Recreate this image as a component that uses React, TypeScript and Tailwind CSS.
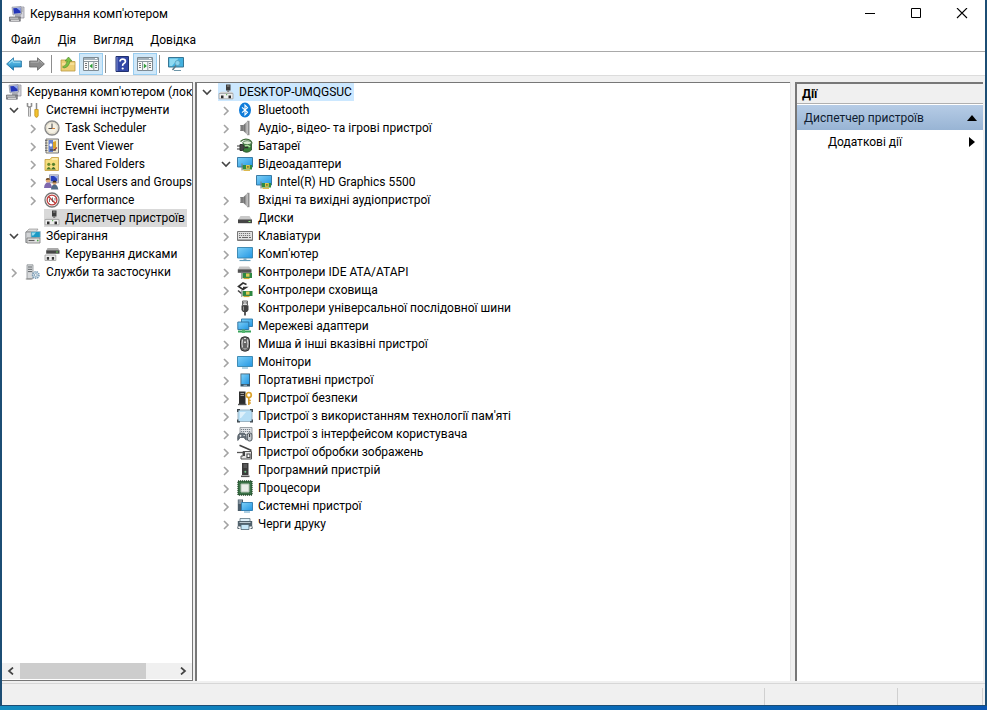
import type { ReactNode } from "react";

/* ---------- icons, all on a 16 x 16 grid ---------- */

function Svg({ children }: { children: ReactNode }) {
  return (
    <svg viewBox="0 0 16 16" className="h-4 w-4 shrink-0" aria-hidden="true">
      {children}
    </svg>
  );
}

function Gradients() {
  return (
    <svg className="absolute h-0 w-0" aria-hidden="true">
      <defs>
        <linearGradient id="screen" x1="0" y1="0" x2="1" y2="1">
          <stop offset="0" stopColor="#7fd0f7" />
          <stop offset="1" stopColor="#2196e3" />
        </linearGradient>
        <linearGradient id="cone" x1="0" y1="0" x2="1" y2="0">
          <stop offset="0" stopColor="#555" />
          <stop offset="1" stopColor="#c2c2c2" />
        </linearGradient>
        <linearGradient id="blueArrow" x1="0" y1="0" x2="0" y2="1">
          <stop offset="0" stopColor="#7bd3f2" />
          <stop offset="1" stopColor="#1583c0" />
        </linearGradient>
      </defs>
    </svg>
  );
}

const ComputerManagement = () => (
  <Svg>
    <path d="M11 1h4v11h-4z" fill="#d8d8de" stroke="#8a8a96" strokeWidth=".7" />
    <path d="M3 1.2l9-.7.6 7.5-8.6 1z" fill="#c7cad6" stroke="#888d9c" strokeWidth=".7" />
    <path d="M4.2 2.2l7-.5.5 5.4-6.8.7z" fill="#2436b8" />
    <path d="M7.5 2l3.7-.3.4 3.5z" fill="#8fa6f0" />
    <path d="M6 9h5l1 2H6z" fill="#a9abb5" />
    <path d="M.5 11h10.8v4.2H.5z" fill="#8b8c90" stroke="#57585c" strokeWidth=".6" />
    <path d="M2 11.5v1.6m2-1.6v1.6m2-1.6v1.6m2-1.6v1.6M2 14.3h8" stroke="#e6e6e6" />
    <path d="M12.5 3h1.6m-1.6 2h1.6" stroke="#888" strokeWidth=".7" />
  </Svg>
);

const Tools = () => (
  <Svg>
    <path d="M2.5 1v3l2 1.3L6.5 4V1" fill="none" stroke="#8f8f8f" strokeWidth="1.6" />
    <path d="M4.5 5v9.5" stroke="#9c9c9c" strokeWidth="3" />
    <path d="M4.5 6v8" stroke="#dedede" />
    <path d="M11.5 1v6.5" stroke="#8a8a8a" strokeWidth="1.5" />
    <path d="M9.8 7.5h3.4v6.3l-1 1.4h-1.4l-1-1.4z" fill="#f2c230" stroke="#b98a10" strokeWidth=".7" />
  </Svg>
);

const Clock = () => (
  <Svg>
    <circle cx="8" cy="8" r="7" fill="#f4f0e4" stroke="#8a8a8a" strokeWidth="1.4" />
    <circle cx="8" cy="8" r="5.6" fill="none" stroke="#d8d2c0" strokeWidth=".8" />
    <path d="M8 3.5V8.5H4.5" fill="none" stroke="#555" strokeWidth="1.1" />
    <path d="M8 8.5h3" stroke="#d07a30" strokeWidth=".9" />
  </Svg>
);

const EventLog = () => (
  <Svg>
    <path d="M2 1h12.5v14H2z" fill="#efe9cf" stroke="#77777b" />
    <path d="M1 2.5h2.5M1 5h2.5M1 7.5h2.5M1 10h2.5M1 12.5h2.5" stroke="#6f6f6f" />
    <path d="M4.5 2h4.5v12H4.5z" fill="#6781cf" />
    <path d="M5 7l2-2 1.5 2-1.5 2z" fill="#fff" />
    <path d="M9 4l3-1v7l-3 1z" fill="#dba42a" />
    <path d="M9.5 12.5l3.5-3" stroke="#b04030" strokeWidth="1.2" />
    <path d="M6 12h6" stroke="#333" />
  </Svg>
);

const SharedFolder = () => (
  <Svg>
    <path d="M1 3.5h5l1.5-2h7v13H1z" fill="#f6dd7e" stroke="#c19b38" strokeWidth=".8" />
    <path d="M8 3h5.5" stroke="#fff6c9" strokeWidth="1.2" />
    <circle cx="4.8" cy="8.3" r="1.6" fill="#6f8d30" />
    <path d="M2.3 13.5q2.5-5 4.8 0z" fill="#4f7a26" />
    <circle cx="9.5" cy="8.3" r="1.6" fill="#57812c" />
    <path d="M7 13.5q2.5-5 4.8 0z" fill="#3f6b2a" />
  </Svg>
);

const Users = () => (
  <Svg>
    <path d="M5.5.8h9v8h-9z" fill="#cfd2dd" stroke="#8a8fa3" strokeWidth=".8" />
    <path d="M6.7 2h6.6v5.3H6.7z" fill="#2740bd" />
    <path d="M10 2h3.3v3z" fill="#93a9ef" />
    <circle cx="4" cy="6.5" r="2.3" fill="#e2ad78" />
    <path d="M1.7 6a2.4 2.4 0 0 1 4.6-.5z" fill="#664420" />
    <path d="M0 14q.5-5.5 4-5.5T8 14z" fill="#7f68ae" />
    <circle cx="10.5" cy="9" r="2" fill="#dda46e" />
    <path d="M8.5 8.5a2 2 0 0 1 4 0z" fill="#3d3020" />
    <path d="M7 15.5q.5-5 3.5-5t3.8 5z" fill="#506b86" />
  </Svg>
);

const Performance = () => (
  <Svg>
    <circle cx="8" cy="8" r="7" fill="#fff" stroke="#777" strokeWidth="1.3" />
    <circle cx="8" cy="8" r="4.9" fill="#fff" stroke="#bd3d3b" strokeWidth="1.3" />
    <path d="M4.7 4.7l6.6 6.6" stroke="#c2403c" strokeWidth="1.5" />
    <path d="M5.5 10V7m3 3V5.5m2.5 3V6" stroke="#555" strokeWidth=".8" />
  </Svg>
);

const DeviceManager = () => (
  <Svg>
    <path d="M8 .5h4.5v6H8z" fill="#3d3d3d" />
    <path d="M9 2h2.5" stroke="#999" />
    <path d="M10.2 6.5v3" stroke="#666" strokeWidth="2" />
    <path d="M1 9.5L3 7.8h11l1.5 1.7z" fill="#d0d0d0" />
    <path d="M1 9.5h14v5.3H1z" fill="#efefef" stroke="#a0a0a0" strokeWidth=".8" />
    <path d="M3 11.5h2.5v2.7H3zM10.5 11.5h2.5v2.7h-2.5z" fill="#2c2c2c" />
    <path d="M8 10h1.2v1.2H8z" fill="#67b95d" />
  </Svg>
);

const Storage = () => (
  <Svg>
    <path d="M1 4L4 1h9l-2 3z" fill="#d9d9d9" stroke="#888" strokeWidth=".6" />
    <path d="M.8 4h9.5v10.5H.8z" fill="#d2d4d6" stroke="#7b7e82" strokeWidth=".8" />
    <path d="M6 3.5h9.3v6H6z" fill="#1b9ac5" stroke="#a7b8c0" strokeWidth=".8" />
    <path d="M7 4.5h4l-2.5 3H7z" fill="#95dbed" />
    <path d="M2 10h13v5H2z" fill="#e2e2e2" stroke="#777" strokeWidth=".8" />
    <path d="M3.5 12.5h6" stroke="#5d5d5d" strokeWidth="1.2" />
    <path d="M12 12.5h1.5" stroke="#4aa845" strokeWidth="1.3" />
  </Svg>
);

const DiskManagement = () => (
  <Svg>
    <path d="M3.5 2h10.5l1.5 2.5H2.3z" fill="#aaa" />
    <path d="M2.2 4.3h13.3v3.4H2.2z" fill="#474747" />
    <path d="M12 6h2" stroke="#6fd05f" />
    <path d="M1 9h10.8v5.5H1z" fill="#efefef" stroke="#9a9a9a" strokeWidth=".8" />
    <path d="M2.8 11h2.3v2.7H2.8zM7.8 11h2.3v2.7H7.8z" fill="#383838" />
  </Svg>
);

const Services = () => (
  <Svg>
    <path d="M2 .8h6v14H2z" fill="#d7d9db" stroke="#8c9094" strokeWidth=".8" />
    <path d="M3 3h4M3 5.3h4M3 7.6h4" stroke="#5f6468" />
    <path d="M.8 15h6" stroke="#888" />
    <circle cx="10.8" cy="11" r="3.2" fill="#d7e6f1" stroke="#7c9db5" strokeWidth="1.6" strokeDasharray="1.4 .8" />
    <circle cx="10.8" cy="11" r="1.4" fill="#fff" stroke="#6f8da3" strokeWidth=".7" />
  </Svg>
);

const Bluetooth = () => (
  <Svg>
    <ellipse cx="8" cy="8" rx="6" ry="7.6" fill="#0f7cda" />
    <path d="M5 5.3l5.5 5L8 12.8V3.2l2.5 2.5L5 10.7" fill="none" stroke="#fff" strokeWidth="1.1" />
  </Svg>
);

const Speaker = () => (
  <Svg>
    <path d="M3 5h3.5v6H3z" fill="#7b7b7b" />
    <path d="M6.5 5L10 1.5v13L6.5 11z" fill="url(#cone)" />
    <path d="M10 .8v14.4h2.5V.8z" fill="#8f8f8f" />
    <path d="M10.5 1.5v13" stroke="#bdbdbd" />
    <path d="M3.5 5.5v5" stroke="#c4c4c4" strokeWidth=".8" />
  </Svg>
);

const Battery = () => (
  <Svg>
    <path d="M3.5 3.5Q7 0 11.5 1.5q3 1 3.5 4" fill="none" stroke="#3d6a36" strokeWidth="1.3" />
    <path d="M6 4.5h8.5v7.5q-4 4-8.5 1z" fill="#397f3b" stroke="#244f28" strokeWidth=".8" />
    <ellipse cx="10.2" cy="4.7" rx="4.3" ry="2" fill="#dcebd5" stroke="#2f5d31" strokeWidth=".8" />
    <path d="M8 8q3-1.5 5 1" fill="none" stroke="#b5dfa5" strokeWidth="1.4" />
    <path d="M0 8h3M0 11h3" stroke="#333" strokeWidth="1.2" />
    <path d="M3 6.5h2.5q3.5 3 0 6H3z" fill="#444" stroke="#333" />
    <path d="M8 9.5h3" stroke="#2d2d2d" strokeWidth="1.4" />
  </Svg>
);

const DisplayAdapter = () => (
  <Svg>
    <path d="M.5 1.5h15v9.5H.5z" fill="url(#screen)" stroke="#2c719c" strokeWidth=".9" />
    <path d="M5.5 9h9.5v4.5H5.5z" fill="#2f8b43" />
    <path d="M5 7.5v7" stroke="#7b7b7b" />
    <path d="M9 9h3.8v3.8H9z" fill="#dcc750" />
    <path d="M10 10h1.8v1.8H10z" fill="#857e33" />
    <path d="M6.5 14.3h6.5" stroke="#d8b23b" strokeWidth="1.2" />
  </Svg>
);

const Drive = () => (
  <Svg>
    <path d="M3.5 6h9l2.5 4H1z" fill="#c9c9c9" />
    <path d="M1 9.5h14v3.7H1z" fill="#464646" />
    <path d="M11.5 11.5H13.5" stroke="#8cf07a" />
  </Svg>
);

const KeyboardIcon = () => (
  <Svg>
    <path d="M.5 3.5h15v9H.5z" fill="#e2e2e2" stroke="#777" />
    <path d="M2 5.5h12M2 7.5h12" stroke="#777" strokeDasharray="1.2 .8" />
    <path d="M2 9.5h2m1 0h6m1 0h2" stroke="#666" />
    <path d="M1 11.5h14" stroke="#aaa" />
  </Svg>
);

const Computer = () => (
  <Svg>
    <path d="M.5 1.5h15v10.5H.5z" fill="url(#screen)" stroke="#3382ad" strokeWidth=".9" />
    <path d="M6.5 12h3v2h-3z" fill="#8bb0c4" />
    <path d="M2.5 14.5h11" stroke="#5f9dbd" strokeWidth="1.2" />
  </Svg>
);

const IdeController = () => (
  <Svg>
    <path d="M2.5 2.5H12l2.5 3H.8z" fill="#c5c5c5" />
    <path d="M.8 5.3h13.7v3.5H.8z" fill="#535353" />
    <path d="M5.5 9h9.5v5H5.5z" fill="#2e8842" />
    <path d="M4.8 7.5v7.5" stroke="#777" />
    <path d="M9 9.5h3.5v3.2H9z" fill="#e0c958" />
    <path d="M6.5 14.5h6" stroke="#cda83a" strokeWidth="1.2" />
  </Svg>
);

const StorageController = () => (
  <Svg>
    <path d="M9.5 2.5L6 1 1.5 4.5 6 7.5 9 5.5H6" fill="none" stroke="#333" strokeWidth="1.6" />
    <path d="M1 8.5l3.5 3" stroke="#444" strokeWidth="1.6" />
    <path d="M5.5 9h10v5h-10z" fill="#2e8842" />
    <path d="M4.8 8v7" stroke="#888" />
    <path d="M9 9.5h3.5v3.2H9z" fill="#e0c958" />
    <path d="M6.5 14.5h6" stroke="#cda83a" strokeWidth="1.2" />
  </Svg>
);

const Usb = () => (
  <Svg>
    <path d="M5.5 1h5v4.5h-5z" fill="#ddd" stroke="#666" />
    <path d="M6.8 2.2v1.5m2.4-1.5v1.5" stroke="#444" />
    <path d="M4.5 5.5h7v4.5l-1.5 2H6l-1.5-2z" fill="#424242" />
    <path d="M6.5 6.5v4" stroke="#999" />
    <path d="M8 12v3.5" stroke="#333" strokeWidth="1.6" />
  </Svg>
);

const Network = () => (
  <Svg>
    <path d="M4.5 1h11v7.5h-11z" fill="url(#screen)" stroke="#2b79a8" strokeWidth=".9" />
    <path d="M.8 4h11v7.5H.8z" fill="url(#screen)" stroke="#2b6e9c" strokeWidth=".9" />
    <path d="M1 13.5h13" stroke="#37a35a" strokeWidth="2" />
    <path d="M5 11.5h3v3.5H5z" fill="#54b56f" />
  </Svg>
);

const Mouse = () => (
  <Svg>
    <rect x="3.5" y=".8" width="9" height="14.4" rx="4" fill="#666" stroke="#333" />
    <path d="M5.5 3.5q-1 4 0 8M10.5 3.5q1 4 0 8" fill="none" stroke="#d8d8d8" strokeWidth="1.2" />
    <path d="M8 2v5" stroke="#ddd" strokeWidth="2" />
    <path d="M8 3v2.5" stroke="#222" strokeWidth="1.2" />
    <path d="M6.5 12.5q1.5 1.2 3 0" stroke="#bbb" fill="none" />
  </Svg>
);

const Monitor = () => (
  <Svg>
    <path d="M.5 2.5h15v10H.5z" fill="url(#screen)" stroke="#3382ad" strokeWidth=".9" />
    <path d="M5 14h6" stroke="#62a7c9" />
  </Svg>
);

const Portable = () => (
  <Svg>
    <path d="M3.5 1.5h9.5v13H3.5z" fill="#36566b" />
    <path d="M4.3 2.3h7.9v9.7H4.3z" fill="url(#screen)" />
    <path d="M6.5 13.3h3.5" stroke="#b5d7e8" strokeWidth=".8" />
  </Svg>
);

const Security = () => (
  <Svg>
    <path d="M2 1.5h6.5v13H2z" fill="#2e2e2e" />
    <path d="M3.5 3.5h3.5M3.5 5.5h3.5" stroke="#999" />
    <path d="M1 14.5h8.5" stroke="#555" strokeWidth="1.4" />
    <circle cx="11.8" cy="5" r="2.5" fill="none" stroke="#dba32b" strokeWidth="1.7" />
    <path d="M11.8 7.5v7.5M11.8 10.5h2M11.8 13h2" stroke="#d79a22" strokeWidth="1.5" />
  </Svg>
);

const MemoryTech = () => (
  <Svg>
    <path d="M1 2h14v11.5H1z" fill="#b6def5" stroke="#9cb5c4" />
    <path d="M.7 4V1.7H3M13 1.7h2.3V4M15.3 11.5v2.3H13M3 13.8H.7v-2.3" fill="none" stroke="#39434a" strokeWidth="1.3" />
    <path d="M3 4h6l-5 6H3z" fill="#dff1fb" />
  </Svg>
);

const Hid = () => (
  <Svg>
    <path d="M3 1.5h12v7H3z" fill="#e2e5e8" stroke="#858b91" strokeWidth=".8" />
    <path d="M4 3.5h10M4 5.5h10" stroke="#78808a" strokeDasharray="1.2 .8" />
    <path d="M.8 14.5q-.8-6 2-7.3h4.5q2.5 1.5 2 7l-2.5-2.7H3.2z" fill="#667079" stroke="#465059" strokeWidth=".7" />
    <path d="M2.5 9.8h2m-1-1v2M6.5 9.5h1.3" stroke="#fff" strokeWidth=".8" />
    <rect x="10.3" y="7" width="4.7" height="8" rx="2" fill="#c5cbd0" stroke="#50585f" />
    <path d="M12.6 8v3" stroke="#333" />
  </Svg>
);

const Imaging = () => (
  <Svg>
    <path d="M2.5 1.2L14.5 6.5" stroke="#444" strokeWidth="1.6" />
    <path d="M0 8.5h6" stroke="#555" strokeWidth="1.3" />
    <path d="M6 7.5h8.5v7.5H4v-3h2z" fill="#e3e3e3" stroke="#525252" />
    <path d="M6 8h2v4H6z" fill="#444" />
    <path d="M10 10h3v3.5h-3z" fill="#fff" stroke="#444" strokeWidth="1.1" />
  </Svg>
);

const SoftwareDevice = () => (
  <Svg>
    <path d="M5 1h6.5v12H5z" fill="#3b3b3b" />
    <path d="M6.5 3h3.5M6.5 5h3.5" stroke="#777" />
    <circle cx="8.3" cy="9.8" r="1" fill="#77c68c" />
    <path d="M4 14.3h8.5" stroke="#555" strokeWidth="1.6" />
  </Svg>
);

const Cpu = () => (
  <Svg>
    <path d="M1 1h14v14H1z" fill="#397146" stroke="#264e2e" strokeDasharray="1.2 .8" strokeWidth="1.3" />
    <path d="M4 4h8v8H4z" fill="#e9eee9" stroke="#b3c3b4" />
  </Svg>
);

const SystemDevice = () => (
  <Svg>
    <path d="M.8 1.5H6v11.5H.8z" fill="#4a5b68" />
    <path d="M1.5 3h3.5M1.5 5h3.5" stroke="#c0cdd6" />
    <path d="M4.5 4.5h11v8h-11z" fill="url(#screen)" stroke="#2a7bb0" strokeWidth=".9" />
    <path d="M7 14h6" stroke="#5e9fc4" />
  </Svg>
);

const Printer = () => (
  <Svg>
    <path d="M3 2.5h10v3H3z" fill="#dff0f8" stroke="#5d7480" strokeWidth=".8" />
    <path d="M.8 5h14.4v5.500H.8z" fill="#50616b" />
    <path d="M2.5 6.5h11" stroke="#b8c6cd" />
    <path d="M4 8.5h8v5H4z" fill="#c5e6f6" stroke="#4d626e" strokeWidth=".8" />
    <path d="M.8 10.500v2h1.700m11 0h1.700v-2" fill="none" stroke="#57666e" />
  </Svg>
);

/* ---------- toolbar icons ---------- */

const BackArrow = () => (
  <Svg>
    <path d="M.6 8L7.5 1.8V5H15.4v6H7.5v3.2z" fill="url(#blueArrow)" stroke="#1e6f9e" strokeWidth=".8" strokeLinejoin="round" />
    <path d="M3 7.5L7 4v2.2h7.3" fill="none" stroke="#b5eafa" strokeWidth=".8" />
  </Svg>
);

const ForwardArrow = () => (
  <Svg>
    <path d="M15.4 8L8.5 1.8V5H.6v6h7.9v3.2z" fill="#8b8b8b" stroke="#646464" strokeWidth=".8" strokeLinejoin="round" />
    <path d="M1.5 6.2h8V4l4 3.5" fill="none" stroke="#b8b8b8" strokeWidth=".8" />
  </Svg>
);

const UpFolder = () => (
  <Svg>
    <path d="M1 4h5l1 1.5h8V15H1z" fill="#edcf75" stroke="#b99842" strokeWidth=".8" />
    <path d="M2 8h12.5" stroke="#fff0b8" />
    <path d="M2.5 11q4-1 4.7-6H5L8.5 1l3.5 4H10q-.8 6-6 7z" fill="#7cc142" stroke="#47872a" strokeWidth=".6" />
  </Svg>
);

const Pane = ({ play = false }: { play?: boolean }) => (
  <Svg>
    <path d="M.5 1.5h15v13H.5z" fill="#fafafa" stroke="#7d8a93" />
    <path d="M1 3h14" stroke="#a6b3bc" strokeWidth="2" />
    <path d="M12 2.5h2" stroke="#fff" />
    <path d="M1 5.5h14M5.5 5.5v9M10.8 5.5v9" stroke="#8d999f" />
    <path d="M2 7.5h2m-2 2h2m-2 2h2m8-4h2m-2 2h2m-2 2h2" stroke="#777" />
    <path d={play ? "M6.8 7.5v5l3-2.5z" : "M9.5 7.5v5l-3-2.5z"} fill="#2e9b37" />
  </Svg>
);

const Help = () => (
  <Svg>
    <path d="M2 .5h12.5v15H2z" fill="#3247a6" stroke="#20306f" />
    <path d="M3 1v14" stroke="#8190d1" />
    <path d="M6 5.5q0-2.3 2.7-2.3t2.7 2.3q0 1.3-1.5 2.1T8.7 9.9" fill="none" stroke="#fff" strokeWidth="1.7" />
    <circle cx="8.7" cy="12.5" r="1.1" fill="#fff" />
  </Svg>
);

const ScanComputer = () => (
  <Svg>
    <path d="M.5 1.5h15v9.5H.5z" fill="#43b1df" stroke="#387694" />
    <path d="M1.5 2.5h9L4 10H1.5z" fill="#8fdaf2" />
    <circle cx="9.5" cy="7" r="2.5" fill="#8bd4ee" stroke="#5b9bb5" strokeWidth=".7" />
    <path d="M8 9.5L4.5 14" stroke="#5d7885" strokeWidth="1.5" />
    <path d="M6 14.5h7" stroke="#6d96a9" />
  </Svg>
);

/* ---------- tree ---------- */

type Node = {
  label: string;
  icon: () => ReactNode;
  state?: "open" | "closed" | "leaf" | "root";
  tone?: "gray" | "blue";
  children?: Node[];
};

function Chevron({ open, label }: { open: boolean; label: string }) {
  return (
    <button type="button" aria-label={label} aria-expanded={open} className="mr-1 flex w-[15px] shrink-0 items-center justify-center">
      <svg viewBox="0 0 10 10" className={open ? "h-[10px] w-[10px] text-[#444]" : "mt-0.5 h-[10px] w-[10px] text-[#a3a3a3]"} aria-hidden="true">
        <path d={open ? "M1 3l4 4 4-4" : "M3 1l4 4-4 4"} fill="none" stroke="currentColor" strokeWidth="1.6" />
      </svg>
    </button>
  );
}

function TreeItem({ node }: { node: Node }) {
  const Icon = node.icon;
  const state = node.state ?? "closed";
  const tone = node.tone === "gray" ? "bg-[#d9d9d9]" : node.tone === "blue" ? "bg-[#cce8ff]" : "";
  return (
    <li role="treeitem" aria-selected={node.tone !== undefined}>
      <div className="flex h-[18px] items-center whitespace-nowrap">
        {state === "leaf" && <span className="w-[19px] shrink-0" />}
        {(state === "open" || state === "closed") && <Chevron open={state === "open"} label={node.label} />}
        <span className={`flex h-[18px] items-center gap-[5px] pr-0.5 ${tone}`}>
          <Icon />
          <span>{node.label}</span>
        </span>
      </div>
      {node.children && (
        <ul role="group" className={state === "root" ? "" : "pl-[19px]"}>
          {node.children.map((child) => (
            <TreeItem key={child.label} node={child} />
          ))}
        </ul>
      )}
    </li>
  );
}

const consoleTree: Node = {
  label: "Керування комп'ютером (лок",
  icon: ComputerManagement,
  state: "root",
  children: [
    {
      label: "Системні інструменти",
      icon: Tools,
      state: "open",
      children: [
        { label: "Task Scheduler", icon: Clock },
        { label: "Event Viewer", icon: EventLog },
        { label: "Shared Folders", icon: SharedFolder },
        { label: "Local Users and Groups", icon: Users },
        { label: "Performance", icon: Performance },
        { label: "Диспетчер пристроїв", icon: DeviceManager, state: "leaf", tone: "gray" },
      ],
    },
    {
      label: "Зберігання",
      icon: Storage,
      state: "open",
      children: [{ label: "Керування дисками", icon: DiskManagement, state: "leaf" }],
    },
    { label: "Служби та застосунки", icon: Services },
  ],
};

const deviceTree: Node = {
  label: "DESKTOP-UMQGSUC",
  icon: DeviceManager,
  state: "open",
  tone: "blue",
  children: [
    { label: "Bluetooth", icon: Bluetooth },
    { label: "Аудіо-, відео- та ігрові пристрої", icon: Speaker },
    { label: "Батареї", icon: Battery },
    {
      label: "Відеоадаптери",
      icon: DisplayAdapter,
      state: "open",
      children: [{ label: "Intel(R) HD Graphics 5500", icon: DisplayAdapter, state: "leaf" }],
    },
    { label: "Вхідні та вихідні аудіопристрої", icon: Speaker },
    { label: "Диски", icon: Drive },
    { label: "Клавіатури", icon: KeyboardIcon },
    { label: "Комп'ютер", icon: Computer },
    { label: "Контролери IDE ATA/ATAPI", icon: IdeController },
    { label: "Контролери сховища", icon: StorageController },
    { label: "Контролери універсальної послідовної шини", icon: Usb },
    { label: "Мережеві адаптери", icon: Network },
    { label: "Миша й інші вказівні пристрої", icon: Mouse },
    { label: "Монітори", icon: Monitor },
    { label: "Портативні пристрої", icon: Portable },
    { label: "Пристрої безпеки", icon: Security },
    { label: "Пристрої з використанням технології пам'яті", icon: MemoryTech },
    { label: "Пристрої з інтерфейсом користувача", icon: Hid },
    { label: "Пристрої обробки зображень", icon: Imaging },
    { label: "Програмний пристрій", icon: SoftwareDevice },
    { label: "Процесори", icon: Cpu },
    { label: "Системні пристрої", icon: SystemDevice },
    { label: "Черги друку", icon: Printer },
  ],
};

/* ---------- window chrome ---------- */

function TitleBar() {
  return (
    <header className="flex h-7 items-center pl-[7px]">
      <ComputerManagement />
      <h1 className="ml-[5px] flex-1">Керування комп'ютером</h1>
      <button type="button" aria-label="Згорнути" className="flex h-7 w-[46px] items-center justify-center">
        <svg viewBox="0 0 12 12" className="h-3 w-3" aria-hidden="true">
          <path d="M1 5.5h10" stroke="#000" />
        </svg>
      </button>
      <button type="button" aria-label="Розгорнути" className="flex h-7 w-[46px] items-center justify-center">
        <svg viewBox="0 0 12 12" className="h-3 w-3" aria-hidden="true">
          <path d="M1.5 .5h9v9h-9z" fill="none" stroke="#000" />
        </svg>
      </button>
      <button type="button" aria-label="Закрити" className="flex h-7 w-[46px] items-center justify-center">
        <svg viewBox="0 0 12 12" className="h-3 w-3" aria-hidden="true">
          <path d="M1 0l10 10M11 0L1 10" stroke="#000" strokeWidth="1.1" />
        </svg>
      </button>
    </header>
  );
}

function ToolButton({ label, pressed = false, children }: { label: string; pressed?: boolean; children: ReactNode }) {
  return (
    <button
      type="button"
      aria-label={label}
      aria-pressed={pressed}
      className={
        pressed
          ? "flex h-[22px] w-6 items-center justify-center border border-[#99cdf0] bg-[#cfe7f8]"
          : "flex h-[22px] w-[23px] items-center justify-center"
      }
    >
      {children}
    </button>
  );
}

const Separator = () => <span className="h-[18px] w-px bg-[#8d8d8d]" />;

function Toolbar() {
  return (
    <div role="toolbar" className="flex h-6 items-center border-t border-[#a9a9a9]">
      <ToolButton label="Назад"><BackArrow /></ToolButton>
      <ToolButton label="Вперед"><ForwardArrow /></ToolButton>
      <span className="flex items-center pl-[3px] pr-1"><Separator /></span>
      <ToolButton label="На рівень вище"><UpFolder /></ToolButton>
      <ToolButton label="Дерево консолі" pressed><Pane /></ToolButton>
      <span className="flex items-center pl-0.5 pr-1"><Separator /></span>
      <ToolButton label="Довідка"><Help /></ToolButton>
      <ToolButton label="Область дій" pressed><Pane play /></ToolButton>
      <span className="flex items-center pl-0.5 pr-1"><Separator /></span>
      <ToolButton label="Оновити конфігурацію"><ScanComputer /></ToolButton>
    </div>
  );
}

function ScrollBar() {
  return (
    <div className="mb-px flex h-4 items-center bg-[#f0f0f0]">
      <button type="button" aria-label="Прокрутити ліворуч" className="flex w-[18px] justify-center">
        <svg viewBox="0 0 8 8" className="h-2 w-2" aria-hidden="true">
          <path d="M6 .5L2 4l4 3.5" fill="none" stroke="#444" strokeWidth="1.7" />
        </svg>
      </button>
      <div className="flex h-4 flex-1">
        <div className="w-[82%] bg-[#cdcdcd]" />
      </div>
      <button type="button" aria-label="Прокрутити праворуч" className="flex w-[18px] justify-center">
        <svg viewBox="0 0 8 8" className="h-2 w-2" aria-hidden="true">
          <path d="M2 .5L6 4 2 7.5" fill="none" stroke="#444" strokeWidth="1.7" />
        </svg>
      </button>
    </div>
  );
}

function ActionsPane() {
  return (
    <aside className="w-[188px] shrink-0 border-l-2 border-t-2 border-[#777] bg-white">
      <h2 className="flex h-5 items-center border-b border-[#b0b0b0] bg-[#f0f0f0] pl-[5px] font-bold">Дії</h2>
      <button type="button" className="mt-px flex h-[25px] w-full items-center justify-between bg-linear-to-b from-[#b6cce6] to-[#98b4d4] pl-[7px] pr-1.5 text-[#0f1c30]">
        Диспетчер пристроїв
        <svg viewBox="0 0 10 6" className="h-1.5 w-2.5" aria-hidden="true">
          <path d="M0 6l5-6 5 6z" fill="#000" />
        </svg>
      </button>
      <button type="button" className="flex h-6 w-full items-center justify-between pl-[31px] pr-2">
        Додаткові дії
        <svg viewBox="0 0 6 10" className="h-2.5 w-1.5" aria-hidden="true">
          <path d="M0 0l6 5-6 5z" fill="#000" />
        </svg>
      </button>
    </aside>
  );
}

export default function App() {
  return (
    <div className="flex min-h-screen flex-col bg-linear-to-r from-[#148cc0] to-[#0a55b0] font-['Segoe_UI','Roboto',sans-serif] text-xs text-black">
      <Gradients />
      <div className="mb-1 flex flex-1 flex-col border-b border-l-2 border-r-2 border-[#1c4d74] bg-[#f0f0f0]">
        <div className="border-b border-[#dcdcdc] bg-white">
          <TitleBar />
          <nav className="flex h-[23px] items-center gap-[17px] pl-[9px]">
            <button type="button">Файл</button>
            <button type="button">Дія</button>
            <button type="button">Вигляд</button>
            <button type="button">Довідка</button>
          </nav>
          <Toolbar />
        </div>
        <main className="flex flex-1 pr-0.5 pt-1.5">
          <section className="flex w-[191px] shrink-0 flex-col overflow-hidden border border-l-0 border-[#777] bg-white">
            <ul role="tree" aria-label="Дерево консолі" className="flex-1 pl-1">
              <TreeItem node={consoleTree} />
            </ul>
            <ScrollBar />
          </section>
          <section className="ml-0.5 flex-1 border-l-2 border-t border-[#777] bg-white">
            <ul role="tree" aria-label="Пристрої" className="pl-0.5">
              <TreeItem node={deviceTree} />
            </ul>
          </section>
          <div className="w-[5px] border-l border-[#e3e3e3]" />
          <ActionsPane />
        </main>
        <footer className="mt-0.5 flex h-[22px] border-t border-[#d7d7d7] pr-0.5 pt-1">
          <span className="flex-1 border-r border-[#d0d0d0]" />
          <span className="w-[133px] border-r border-[#d0d0d0]" />
          <span className="w-[85px] border-r border-[#d0d0d0]" />
        </footer>
      </div>
    </div>
  );
}
